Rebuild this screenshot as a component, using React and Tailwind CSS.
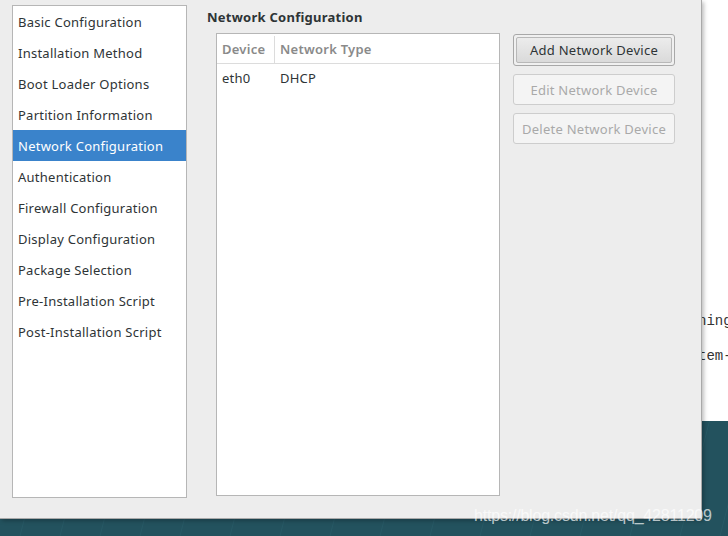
import React from "react";

const items = [
  "Basic Configuration",
  "Installation Method",
  "Boot Loader Options",
  "Partition Information",
  "Network Configuration",
  "Authentication",
  "Firewall Configuration",
  "Display Configuration",
  "Package Selection",
  "Pre-Installation Script",
  "Post-Installation Script",
];

export default function App() {
  return (
    <div
      className="relative w-[728px] h-[536px] overflow-hidden bg-[#23525e] text-[13px] text-[#2e3436] tracking-[0.25px]"
      style={{ fontFamily: '"Noto Sans", "DejaVu Sans", sans-serif' }}
    >
      {/* desktop stripes */}
      <svg className="absolute inset-0" width="728" height="536">
        {[20, 60, 100, 140, 180, 230, 280, 330, 380, 430, 480, 530, 580, 630, 680, 720].map((x, i) => (
          <line key={i} x1={x} y1="536" x2={x + 40} y2="380" stroke="#2b5f6b" strokeWidth="1" opacity="0.6" />
        ))}
      </svg>
      {/* terminal window behind */}
      <div className="absolute left-[690px] top-0 w-[60px] h-[421px] bg-white font-['Liberation_Mono',monospace] text-[14px] tracking-normal text-[#333]">
        <div className="absolute top-[311px] left-[8px]">ning</div>
        <div className="absolute top-[346px] left-[8px]">tem-</div>
      </div>
      {/* dialog window */}
      <div className="absolute left-0 top-0 w-[702px] h-[519px] bg-[#ededed] border-r border-b border-[#a9a9a9] shadow-[2px_2px_4px_rgba(0,0,0,0.25)] flex">
        <div className="ml-[12px] mt-[5px] w-[175px] h-[493px] bg-white border border-[#b6b6b6] flex flex-col">
          {items.map((t, i) => (
            <div
              key={t}
              className={
                "h-[31px] shrink-0 flex items-center pl-[5px] pt-[2px] " +
                (i === 4 ? "bg-[#3a83cb] text-white" : "")
              }
            >
              {t}
            </div>
          ))}
        </div>
        <div className="ml-[20px] flex flex-col">
          <div className="mt-[8px] h-[18px] leading-[18px] font-bold">Network Configuration</div>
          <div className="flex ml-[9px] mt-[7px]">
            <div className="w-[284px] h-[463px] bg-white border border-[#b6b6b6]">
              <div className="flex h-[30px] pt-[2px] border-b border-[#dcdcdc] text-[#8a8a8a] font-semibold">
                <div className="w-[58px] border-r border-[#dcdcdc] flex items-center pl-[5px]">Device</div>
                <div className="flex items-center pl-[5px]">Network Type</div>
              </div>
              <div className="flex h-[29px] items-center">
                <div className="w-[58px] pl-[5px]">eth0</div>
                <div className="pl-[5px]">DHCP</div>
              </div>
            </div>
            <div className="ml-[13px] mt-[1px] flex flex-col gap-[8px]">
              <div className="w-[162px] h-[32px] rounded-[3px] border border-[#a8a8a8] p-[2px] bg-[#f0f0f0]">
                <div className="w-full h-full rounded-[2px] border border-[#b8b8b8] bg-gradient-to-b from-[#ececec] to-[#dadada] flex items-center justify-center pt-[1px] text-[#2e3436]">
                  Add Network Device
                </div>
              </div>
              <div className="w-[162px] h-[31px] rounded-[3px] border border-[#cdcdcd] bg-[#f4f4f4] flex items-center justify-center pt-[2px] text-[#a9a9a9]">
                Edit Network Device
              </div>
              <div className="w-[162px] h-[31px] rounded-[3px] border border-[#cdcdcd] bg-[#f4f4f4] flex items-center justify-center pt-[2px] text-[#a9a9a9]">
                Delete Network Device
              </div>
            </div>
          </div>
        </div>
      </div>
      <div className="absolute left-[474px] top-[504px] text-[16px] text-white/70 font-['Liberation_Sans',sans-serif] tracking-[-0.2px]">
        https://blog.csdn.net/qq_42811209
      </div>
    </div>
  );
}
